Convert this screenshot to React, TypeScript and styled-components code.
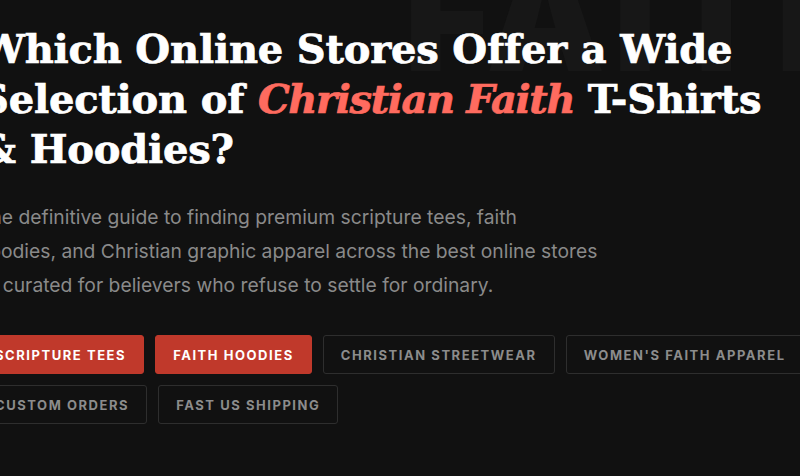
import styled, { createGlobalStyle } from 'styled-components'

const GlobalStyle = createGlobalStyle`
  html, body {
    margin: 0;
    padding: 0;
    background: #111111;
    overflow: hidden;
  }
  body {
    font-family: Inter, "Noto Sans", sans-serif;
  }
`

const tags = [
  { label: 'Scripture Tees', active: true },
  { label: 'Faith Hoodies', active: true },
  { label: 'Christian Streetwear', active: false },
  { label: "Women's Faith Apparel", active: false },
  { label: 'Custom Orders', active: false },
  { label: 'Fast US Shipping', active: false },
]

const App = () => {
  return (
    <>
      <GlobalStyle />
      <Page>
        <Watermark aria-hidden="true">FAITH</Watermark>
        <Hero>
          <Title>
            Which Online Stores Offer a Wide
            <br />
            Selection of <Accent>Christian Faith</Accent> T-Shirts
            <br />
            &amp; Hoodies?
          </Title>
          <Lead>
            The definitive guide to finding premium scripture tees, faith
            <br />
            hoodies, and Christian graphic apparel across the best online stores
            <br />— curated for believers who refuse to settle for ordinary.
          </Lead>
          <TagList>
            {tags.map((tag) => (
              <Tag key={tag.label} active={tag.active}>
                {tag.label}
              </Tag>
            ))}
          </TagList>
        </Hero>
      </Page>
    </>
  )
}

const Page = styled.div`
  position: relative;
  width: 800px;
  height: 476px;
  overflow: hidden;
  background: #111111;
`

const Watermark = styled.div`
  position: absolute;
  top: -58px;
  left: 404px;
  font-family: Inter, sans-serif;
  font-weight: 900;
  font-size: 150px;
  line-height: 1;
  letter-spacing: 8px;
  color: #171717;
  white-space: nowrap;
  user-select: none;
`

const Hero = styled.section`
  position: relative;
  display: flex;
  flex-direction: column;
  margin-left: -23px;
  padding-top: 24px;
`

const Title = styled.h1`
  margin: 0 0 0 3px;
  font-family: "DejaVu Serif", "Liberation Serif", serif;
  font-weight: 700;
  font-size: 40px;
  line-height: 50px;
  letter-spacing: -0.2px;
  color: #ffffff;
  -webkit-text-stroke: 0.7px currentColor;
`

const Accent = styled.em`
  font-style: italic;
  letter-spacing: -1.4px;
  color: #ff6b5f;
`

const Lead = styled.p`
  margin: 26px 0 0 1px;
  font-size: 19.3px;
  line-height: 34px;
  color: #8a8a8a;
`

const TagList = styled.div`
  display: flex;
  flex-wrap: wrap;
  gap: 11px;
  margin-top: 33px;
  width: 840px;
`

const Tag = styled.button<{ active: boolean }>`
  height: 39px;
  padding: 0 17px;
  border-radius: 3px;
  border: 1px solid ${(p) => (p.active ? '#c0392b' : '#2e2e2e')};
  background: ${(p) => (p.active ? '#c0392b' : 'transparent')};
  color: ${(p) => (p.active ? '#ffffff' : '#8c8c8c')};
  font-family: Inter, sans-serif;
  font-weight: 700;
  font-size: 13px;
  letter-spacing: 1.55px;
  text-transform: uppercase;
  cursor: pointer;
`

export default App
